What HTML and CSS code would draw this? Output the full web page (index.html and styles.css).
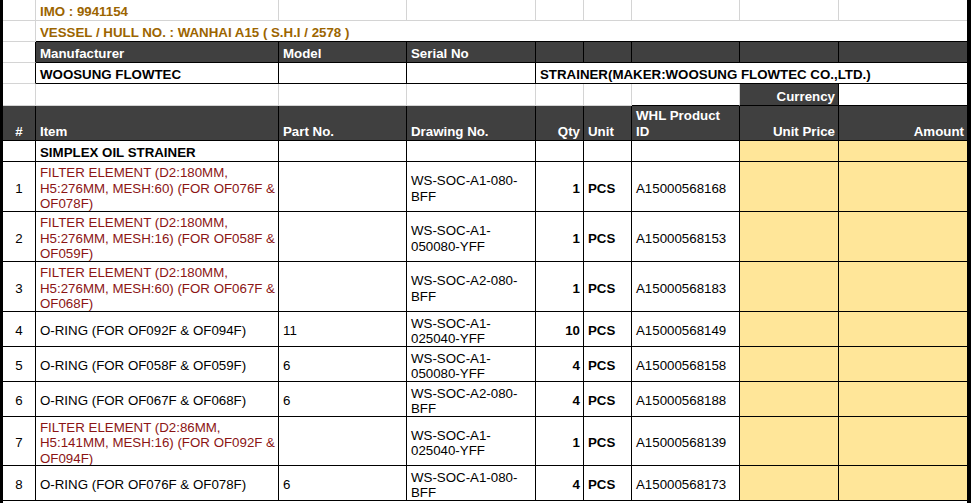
FILE: index.html
```html
<!DOCTYPE html>
<html>
<head>
<meta charset="utf-8">
<link rel="stylesheet" href="styles.css">
</head>
<body>
<div class="sheet">
  <!-- row 1 -->
  <div class="c g"></div>
  <div class="c g imo">IMO : 9941154</div>
  <div class="c g"></div><div class="c g"></div><div class="c g"></div><div class="c g"></div><div class="c g"></div><div class="c g"></div><div class="c g last"></div>
  <!-- row 2 -->
  <div class="c g"></div>
  <div class="c imo span8">VESSEL / HULL NO. : WANHAI A15 ( S.H.I / 2578 )</div>
  <!-- row 3 -->
  <div class="c gbot"></div>
  <div class="c dk">Manufacturer</div><div class="c dk">Model</div><div class="c dk">Serial No</div>
  <div class="c dk"></div><div class="c dk"></div><div class="c dk"></div><div class="c dk"></div><div class="c dk last"></div>
  <!-- row 4 -->
  <div class="c gbot"></div>
  <div class="c b">WOOSUNG FLOWTEC</div><div class="c"></div><div class="c"></div>
  <div class="c b span5 last">STRAINER(MAKER:WOOSUNG FLOWTEC CO.,LTD.)</div>
  <!-- row 5 -->
  <div class="c g"></div>
  <div class="c g"></div><div class="c g"></div><div class="c g"></div><div class="c g"></div><div class="c g"></div>
  <div class="c gr"></div>
  <div class="c dk r">Currency</div>
  <div class="c last"></div>
  <!-- row 6 header -->
  <div class="c dk hd ctr">#</div>
  <div class="c dk hd">Item</div>
  <div class="c dk hd">Part No.</div>
  <div class="c dk hd">Drawing No.</div>
  <div class="c dk hd r">Qty</div>
  <div class="c dk hd">Unit</div>
  <div class="c dk hd"><span>WHL Product<br>ID</span></div>
  <div class="c dk hd r">Unit Price</div>
  <div class="c dk hd r last">Amount</div>
  <!-- row 7 -->
  <div class="c"></div>
  <div class="c b">SIMPLEX OIL STRAINER</div>
  <div class="c"></div><div class="c"></div><div class="c"></div><div class="c"></div><div class="c"></div>
  <div class="c gold"></div><div class="c gold last"></div>
  <!-- item 1 -->
  <div class="c ctr">1</div>
  <div class="c red"><span>FILTER ELEMENT (D2:180MM,<br>H5:276MM, MESH:60) (FOR OF076F &amp;<br>OF078F)</span></div>
  <div class="c"></div>
  <div class="c"><span>WS-SOC-A1-080-<br>BFF</span></div>
  <div class="c b r">1</div>
  <div class="c b">PCS</div>
  <div class="c">A15000568168</div>
  <div class="c gold"></div><div class="c gold last"></div>
  <!-- item 2 -->
  <div class="c ctr">2</div>
  <div class="c red"><span>FILTER ELEMENT (D2:180MM,<br>H5:276MM, MESH:16) (FOR OF058F &amp;<br>OF059F)</span></div>
  <div class="c"></div>
  <div class="c"><span>WS-SOC-A1-<br>050080-YFF</span></div>
  <div class="c b r">1</div>
  <div class="c b">PCS</div>
  <div class="c">A15000568153</div>
  <div class="c gold"></div><div class="c gold last"></div>
  <!-- item 3 -->
  <div class="c ctr">3</div>
  <div class="c red"><span>FILTER ELEMENT (D2:180MM,<br>H5:276MM, MESH:60) (FOR OF067F &amp;<br>OF068F)</span></div>
  <div class="c"></div>
  <div class="c"><span>WS-SOC-A2-080-<br>BFF</span></div>
  <div class="c b r">1</div>
  <div class="c b">PCS</div>
  <div class="c">A15000568183</div>
  <div class="c gold"></div><div class="c gold last"></div>
  <!-- item 4 -->
  <div class="c ctr">4</div>
  <div class="c">O-RING (FOR OF092F &amp; OF094F)</div>
  <div class="c">11</div>
  <div class="c"><span>WS-SOC-A1-<br>025040-YFF</span></div>
  <div class="c b r">10</div>
  <div class="c b">PCS</div>
  <div class="c">A15000568149</div>
  <div class="c gold"></div><div class="c gold last"></div>
  <!-- item 5 -->
  <div class="c ctr">5</div>
  <div class="c">O-RING (FOR OF058F &amp; OF059F)</div>
  <div class="c">6</div>
  <div class="c"><span>WS-SOC-A1-<br>050080-YFF</span></div>
  <div class="c b r">4</div>
  <div class="c b">PCS</div>
  <div class="c">A15000568158</div>
  <div class="c gold"></div><div class="c gold last"></div>
  <!-- item 6 -->
  <div class="c ctr">6</div>
  <div class="c">O-RING (FOR OF067F &amp; OF068F)</div>
  <div class="c">6</div>
  <div class="c"><span>WS-SOC-A2-080-<br>BFF</span></div>
  <div class="c b r">4</div>
  <div class="c b">PCS</div>
  <div class="c">A15000568188</div>
  <div class="c gold"></div><div class="c gold last"></div>
  <!-- item 7 -->
  <div class="c ctr">7</div>
  <div class="c red"><span>FILTER ELEMENT (D2:86MM,<br>H5:141MM, MESH:16) (FOR OF092F &amp;<br>OF094F)</span></div>
  <div class="c"></div>
  <div class="c"><span>WS-SOC-A1-<br>025040-YFF</span></div>
  <div class="c b r">1</div>
  <div class="c b">PCS</div>
  <div class="c">A15000568139</div>
  <div class="c gold"></div><div class="c gold last"></div>
  <!-- item 8 -->
  <div class="c ctr">8</div>
  <div class="c">O-RING (FOR OF076F &amp; OF078F)</div>
  <div class="c">6</div>
  <div class="c"><span>WS-SOC-A1-080-<br>BFF</span></div>
  <div class="c b r">4</div>
  <div class="c b">PCS</div>
  <div class="c">A15000568173</div>
  <div class="c gold"></div><div class="c gold last"></div>
</div>
</body>
</html>
```

FILE: styles.css
```css
html, body {
  margin: 0;
  padding: 0;
  background: #fff;
}
body {
  font-family: "Liberation Sans", Arial, sans-serif;
  font-size: 13.3px;
  color: #000;
}
.sheet {
  width: 964px;
  height: 503px;
  border-left: 3px solid #000;
  border-right: 4px solid #000;
  display: grid;
  grid-template-columns: 33px 243px 128px 129px 48px 48px 108px 99px 128px;
  grid-template-rows: 21px 21px 21px 21px 22px 35px 21px 50px 50px 50px 35px 35px 35px 49px 35px;
  overflow: hidden;
}
.c {
  box-sizing: border-box;
  min-width: 0;
  border-right: 1px solid #000;
  border-bottom: 1px solid #000;
  padding: 4px 3px 0 4px;
  display: flex;
  align-items: center;
  white-space: nowrap;
  overflow: hidden;
  line-height: 15.5px;
}
.c.last { border-right: 0; }
.g { border-color: #d4d4d4; }
.gbot { border-bottom-color: #d4d4d4; }
.gr { border-right-color: #d4d4d4; }
.imo {
  color: #9c6500;
  font-weight: bold;
}
.span8 { grid-column: span 8; border-right: 0; }
.span5 { grid-column: span 5; }
.dk {
  background: #404040;
  color: #fff;
  font-weight: bold;
}
.hd {
  align-items: flex-end;
  padding-top: 0;
  padding-bottom: 1px;
}
.b { font-weight: bold; }
.r { justify-content: flex-end; }
.ctr { justify-content: center; padding-left: 0; padding-right: 0; }
.red { color: #8b1414; }
.gold { background: #ffe699; }
```
